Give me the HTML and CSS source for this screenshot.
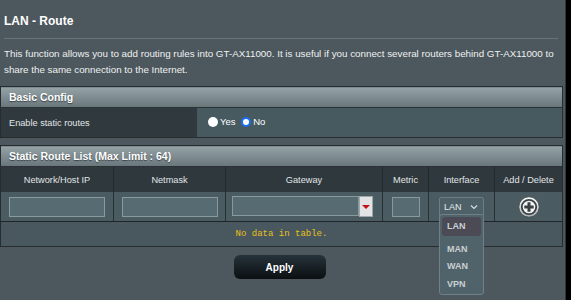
FILE: index.html
```html
<!DOCTYPE html>
<html lang="en">
<head>
  <meta charset="UTF-8" />
  <title>LAN - Route</title>
  <link rel="stylesheet" href="styles.css">
</head>
<body>
  <div class="page">
    <div class="title">LAN - Route</div>
    <div class="rule"></div>
    <p class="desc">This function allows you to add routing rules into GT-AX11000. It is useful if you connect several routers behind GT-AX11000 to share the same connection to the Internet.</p>

    <table class="form-table">
      <thead><tr><td colspan="2">Basic Config</td></tr></thead>
      <tbody>
        <tr>
          <th>Enable static routes</th>
          <td>
            <label class="radio"><span class="dot"></span>Yes</label>
            <label class="radio"><span class="dot on"></span>No</label>
          </td>
        </tr>
      </tbody>
    </table>

    <table class="list-table">
      <thead><tr><td colspan="6">Static Route List (Max Limit : 64)</td></tr></thead>
      <tbody>
        <tr class="col-head">
          <th class="c-ip">Network/Host IP</th>
          <th class="c-mask">Netmask</th>
          <th class="c-gw">Gateway</th>
          <th class="c-metric">Metric</th>
          <th class="c-if">Interface</th>
          <th class="c-add">Add / Delete</th>
        </tr>
        <tr class="input-row">
          <td><div class="field w-ip"></div></td>
          <td><div class="field w-ip"></div></td>
          <td>
            <div class="gw">
              <div class="field w-gw"></div>
              <div class="gw-btn"><span class="tri"></span></div>
            </div>
          </td>
          <td><div class="field w-metric"></div></td>
          <td>
            <div class="select-wrap">
              <div class="select">LAN <svg width="8" height="6" viewBox="0 0 8 6"><path d="M1 1.5 L4 4.5 L7 1.5" fill="none" stroke="#d8dde0" stroke-width="1.2"/></svg></div>
              <ul class="options">
                <li class="sel">LAN</li>
                <li>MAN</li>
                <li>WAN</li>
                <li>VPN</li>
              </ul>
            </div>
          </td>
          <td>
            <svg class="add" width="22" height="22" viewBox="0 0 22 22">
              <defs>
                <linearGradient id="g" x1="0" y1="0" x2="0" y2="1">
                  <stop offset="0" stop-color="#ffffff"/>
                  <stop offset="1" stop-color="#a7afb2"/>
                </linearGradient>
              </defs>
              <circle cx="11" cy="11" r="10.2" fill="url(#g)" stroke="#41494c" stroke-width="0.8"/>
              <circle cx="11" cy="11" r="7.2" fill="#f2f3f3" stroke="#3a4144" stroke-width="1.8"/>
              <path d="M11 6.3 V15.7 M6.3 11 H15.7" stroke="#3a4144" stroke-width="3"/>
            </svg>
          </td>
        </tr>
        <tr><td colspan="6" class="nodata">No data in table.</td></tr>
      </tbody>
    </table>

    <div class="apply-wrap"><button class="apply">Apply</button></div>
  </div>
</body>
</html>
```

FILE: styles.css
```css
body { margin: 0; background: #000; font-family: "Liberation Sans", Arial, sans-serif; }
.page {
  width: 566px; height: 300px; background: #4d585e; color: #fff;
  box-shadow: inset -1px 0 0 #2f3538;
}

.title { padding: 13px 4px 0; font-size: 12px; font-weight: bold; line-height: 16px; }
.rule { margin: 9px 8px 0 4px; height: 1px; background: #66757b; }
.desc { margin: 7px 8px 8px 4px; font-size: 9.8px; line-height: 16px; color: #eef0f1; }

table { width: 563px; border-collapse: collapse; border: 1px solid #262c2f; }
table thead td {
  height: 20px; padding: 0 8px; font-size: 10.5px; font-weight: bold;
  background: linear-gradient(#95a2a6, #68757a); border-bottom: 1px solid #2b3236;
  text-shadow: 0 1px 1px #3a4347;
}

.form-table { margin-top: 0; }
.form-table th {
  width: 188px; height: 29px; padding: 0 0 0 8px; text-align: left;
  font-size: 9.2px; font-weight: normal; color: #e4e7e8; background: #2f393e;
}
.form-table tbody td { background: #475a60; padding: 0 0 0 11px; font-size: 9.5px; }
.radio { display: inline-flex; align-items: center; margin-right: 3px; }
.dot {
  width: 10px; height: 10px; border-radius: 50%; background: #fff;
  margin-right: 2px; box-sizing: border-box;
}
.dot.on { border: 2px solid #1a6ef5; background: #fff; box-shadow: inset 0 0 0 1px #fff; }

.list-table { margin-top: 7px; }
.col-head th {
  height: 25px; padding: 0; font-size: 9.2px; font-weight: normal; color: #e2e6e8;
  background: #2e383d; border-right: 1px solid #222a2d;
}
.col-head th:last-child { border-right: none; }
.c-ip { width: 112px; }
.c-mask { width: 111px; }
.c-gw { width: 156px; }
.c-metric { width: 45px; }
.c-if { width: 65px; }

.input-row td {
  height: 29px; padding: 0; text-align: center; background: #4a5b61;
  border-right: 1px solid #283033; border-bottom: 1px solid #1f2528;
}
.input-row td:last-child { border-right: none; }
.field {
  display: inline-block; vertical-align: middle; height: 20px; box-sizing: border-box;
  background: #576b72; border: 1px solid #899a9f;
}
.w-ip { width: 96px; }
.w-gw { width: 127px; }
.w-metric { width: 28px; }
.gw { display: flex; justify-content: flex-start; padding-left: 6px; }
.gw-btn {
  width: 14px; height: 21px; box-sizing: border-box; background: #e1e3e4;
  border: 1px solid #9ea6a9; display: flex; align-items: center; justify-content: center;
}
.tri { width: 0; height: 0; border-left: 4px solid transparent; border-right: 4px solid transparent; border-top: 4px solid #c8101b; }

.select-wrap { position: relative; display: inline-block; vertical-align: middle; }
.select {
  width: 45px; height: 20px; box-sizing: border-box; padding: 0 5px 0 4px;
  display: flex; align-items: center; justify-content: space-between;
  font-size: 9px; color: #e7eaeb; background: #4f6168;
  border: 1px solid #6d7d83; border-radius: 2px;
}
.options {
  position: absolute; left: 0; top: 17px; z-index: 2; width: 45px; box-sizing: border-box;
  margin: 0; padding: 2px 2px 1px; list-style: none; text-align: left;
  background: #51636a; border: 1px solid #6f8086; border-radius: 3px;
}
.options li { height: 17.5px; line-height: 17.5px; padding-left: 5px; font-size: 9px; font-weight: bold; color: #c9d0d3; }
.options li.sel { background: #4b4a55; border-radius: 3px; height: 19px; line-height: 19px; margin-bottom: 5px; }

.add { vertical-align: middle; }

.nodata {
  height: 24px; padding: 0; text-align: center; background: #48585e;
  font-family: "Liberation Mono", monospace; font-size: 9px; color: #e8c01a;
}

.apply-wrap { padding-top: 8px; text-align: center; padding-right: 7px; }
.apply {
  width: 92px; height: 24px; border: none; border-radius: 6px;
  background: linear-gradient(#26333a, #0b0f11); color: #fff;
  font-family: "Liberation Sans", Arial, sans-serif; font-size: 10px; font-weight: bold;
}
```
